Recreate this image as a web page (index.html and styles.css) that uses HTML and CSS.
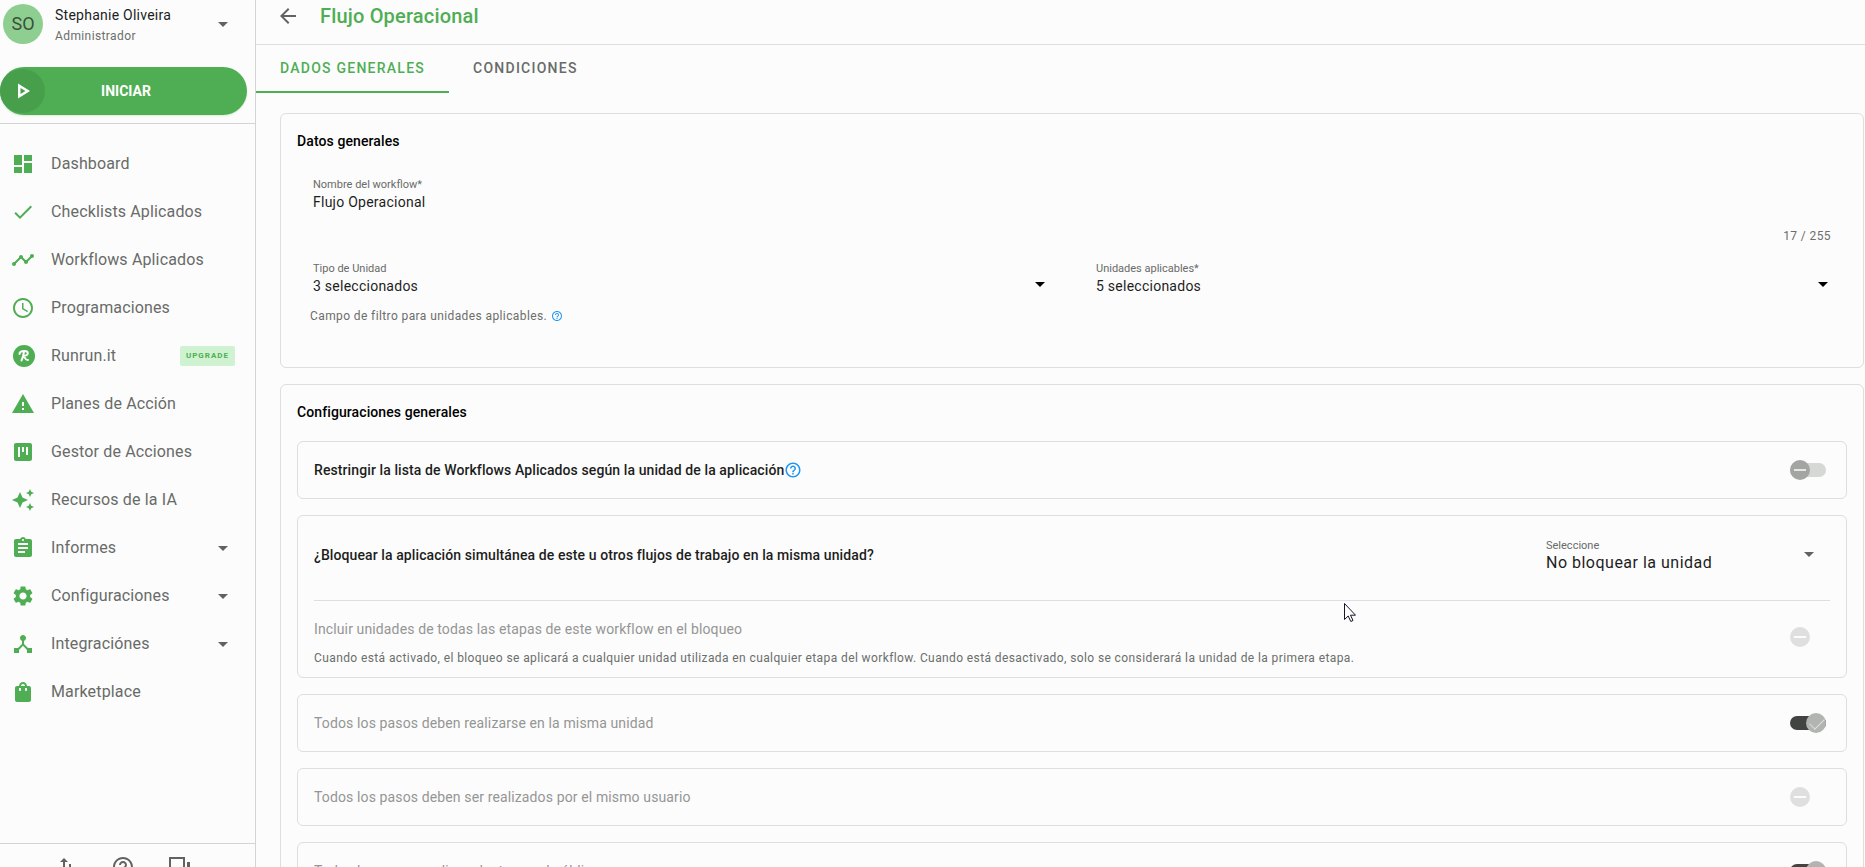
FILE: index.html
```html
<!DOCTYPE html>
<html lang="es">
<head>
<meta charset="UTF-8">
<meta name="viewport" content="width=device-width, initial-scale=1.0">
<title>Flujo Operacional</title>
<link rel="stylesheet" href="styles.css">
</head>
<body>

<div class="app">
  <aside class="sidebar">
    <button class="user" type="button">
      <span class="avatar">SO</span>
      <span class="user-info">
        <span class="user-name">Stephanie Oliveira</span>
        <span class="user-role">Administrador</span>
      </span>
      <svg class="caret" viewBox="0 0 24 24"><path d="M7 10l5 5 5-5z"/></svg>
    </button>

    <div class="start-wrap">
      <button class="start" type="button">
        <span class="start-icon">
          <svg viewBox="0 0 24 24"><path d="M7 4.500v15l12-7.500L7 4.500zm2.500 4.500L14.500 12l-5 3V9z"/></svg>
        </span>
        <span class="start-text">INICIAR</span>
      </button>
    </div>

    <nav class="menu">
      <a href="#"><svg viewBox="0 0 24 24"><path d="M3 13h8V3H3v10zm0 8h8v-6H3v6zm10 0h8V11h-8v10zm0-18v6h8V3h-8z"/></svg><span>Dashboard</span></a>
      <a href="#"><svg viewBox="0 0 24 24"><path d="M9 16.170L4.830 12l-1.420 1.410L9 19 21 7l-1.410-1.410z"/></svg><span>Checklists Aplicados</span></a>
      <a href="#"><svg viewBox="0 0 24 24"><path d="M23 8c0 1.100-.9 2-2 2-.18 0-.35-.02-.51-.07l-3.560 3.550c.05.16.07.34.07.52 0 1.100-.9 2-2 2s-2-.9-2-2c0-.18.02-.36.07-.52l-2.550-2.550c-.16.05-.34.07-.52.07s-.36-.02-.52-.07l-4.550 4.560c.05.16.07.33.07.51 0 1.100-.9 2-2 2s-2-.9-2-2 .9-2 2-2c.18 0 .35.02.51.07l4.560-4.550C8.020 9.360 8 9.180 8 9c0-1.100.9-2 2-2s2 .9 2 2c0 .18-.02.36-.07.52l2.550 2.550c.16-.05.34-.07.52-.07s.36.02.52.07l3.550-3.560C19.020 8.350 19 8.180 19 8c0-1.100.9-2 2-2s2 .9 2 2z"/></svg><span>Workflows Aplicados</span></a>
      <a href="#"><svg viewBox="0 0 24 24"><path d="M11.990 2C6.470 2 2 6.480 2 12s4.470 10 9.990 10C17.520 22 22 17.520 22 12S17.520 2 11.990 2zM12 20c-4.420 0-8-3.580-8-8s3.580-8 8-8 8 3.580 8 8-3.580 8-8 8zm.5-13H11v6l5.250 3.150.75-1.230-4.500-2.670z"/></svg><span>Programaciones</span></a>
      <a href="#"><svg viewBox="0 0 24 24"><circle cx="13" cy="12" r="11"/><path class="brand-line" d="M8.500 10c0-2 2-3 5-3 4 0 5 4.500-1 5 1.500.3 1.300 4.500 4.500 4M13 7.500c-.4 3-1 6-2.500 9"/></svg><span>Runrun.it</span><span class="tag">UPGRADE</span></a>
      <a href="#"><svg viewBox="0 0 24 24"><path d="M1 21h22L12 2 1 21zm12-3h-2v-2h2v2zm0-4h-2v-4h2v4z"/></svg><span>Planes de Acción</span></a>
      <a href="#"><svg viewBox="0 0 24 24"><path d="M19 3H5c-1.100 0-2 .9-2 2v14c0 1.100.9 2 2 2h14c1.100 0 2-.9 2-2V5c0-1.100-.9-2-2-2zM9 17H7V7h2v10zm4-5h-2V7h2v5zm4 3h-2V7h2v8z"/></svg><span>Gestor de Acciones</span></a>
      <a href="#"><svg viewBox="0 0 24 24"><path d="M19 9l1.250-2.750L23 5l-2.750-1.250L19 1l-1.250 2.750L15 5l2.750 1.250L19 9zm-7.500.5L9 4 6.500 9.500 1 12l5.500 2.500L9 20l2.500-5.500L17 12l-5.500-2.500zM19 15l-1.250 2.750L15 19l2.750 1.250L19 23l1.250-2.750L23 19l-2.750-1.250L19 15z"/></svg><span>Recursos de la IA</span></a>
      <a href="#"><svg viewBox="0 0 24 24"><path d="M19 3h-4.180C14.400 1.840 13.300 1 12 1c-1.300 0-2.400.84-2.820 2H5c-1.100 0-2 .9-2 2v14c0 1.100.9 2 2 2h14c1.100 0 2-.9 2-2V5c0-1.100-.9-2-2-2zm-7 0c.55 0 1 .45 1 1s-.45 1-1 1-1-.45-1-1 .45-1 1-1zm2 14H7v-2h7v2zm3-4H7v-2h10v2zm0-4H7V7h10v2z"/></svg><span>Informes</span><svg class="caret" viewBox="0 0 24 24"><path d="M7 10l5 5 5-5z"/></svg></a>
      <a href="#"><svg viewBox="0 0 24 24"><path d="M19.140 12.940c.04-.3.06-.61.06-.94 0-.32-.02-.64-.07-.94l2.030-1.580c.18-.14.23-.41.12-.61l-1.920-3.320c-.12-.22-.37-.29-.59-.22l-2.390.96c-.5-.38-1.030-.7-1.620-.94l-.36-2.540c-.04-.24-.24-.41-.48-.41h-3.840c-.24 0-.43.17-.47.41l-.36 2.540c-.59.24-1.130.57-1.620.94l-2.390-.96c-.22-.08-.47 0-.59.22L2.740 8.870c-.12.21-.08.47.12.61l2.030 1.580c-.05.3-.09.63-.09.94s.02.64.07.94l-2.030 1.580c-.18.14-.23.41-.12.61l1.920 3.320c.12.22.37.29.59.22l2.390-.96c.5.38 1.030.7 1.620.94l.36 2.540c.05.24.24.41.48.41h3.840c.24 0 .44-.17.47-.41l.36-2.540c.59-.24 1.130-.56 1.620-.94l2.390.96c.22.08.47 0 .59-.22l1.920-3.320c.12-.22.07-.47-.12-.61l-2.010-1.580zM12 15.600c-1.980 0-3.600-1.620-3.600-3.600s1.620-3.600 3.600-3.600 3.600 1.620 3.600 3.600-1.620 3.600-3.600 3.600z"/></svg><span>Configuraciones</span><svg class="caret" viewBox="0 0 24 24"><path d="M7 10l5 5 5-5z"/></svg></a>
      <a href="#"><svg viewBox="0 0 24 24"><path d="M17 16l-4-4V8.820C14.160 8.400 15 7.300 15 6c0-1.660-1.340-3-3-3S9 4.340 9 6c0 1.300.84 2.400 2 2.820V12l-4 4H3v5h5v-3.050l4-4.200 4 4.200V21h5v-5h-4z"/></svg><span>Integraciónes</span><svg class="caret" viewBox="0 0 24 24"><path d="M7 10l5 5 5-5z"/></svg></a>
      <a href="#"><svg viewBox="0 0 24 24"><path d="M18 6h-2c0-2.210-1.790-4-4-4S8 3.790 8 6H6c-1.100 0-2 .9-2 2v12c0 1.100.9 2 2 2h12c1.100 0 2-.9 2-2V8c0-1.100-.9-2-2-2zm-8 4c0 .55-.45 1-1 1s-1-.45-1-1V8h2v2zm2-6c1.100 0 2 .9 2 2h-4c0-1.100.9-2 2-2zm4 6c0 .55-.45 1-1 1s-1-.45-1-1V8h2v2z"/></svg><span>Marketplace</span></a>
    </nav>

    <footer class="sidebar-footer">
      <button type="button" aria-label="Cambiar"><svg viewBox="0 0 24 24"><path d="M9 3L5 7h3v8h2V7h3L9 3zm7 6h-2v9h-3l4 4 4-4h-3V9z"/></svg></button>
      <button type="button" aria-label="Ayuda"><svg viewBox="0 0 24 24"><path d="M11 18h2v-2h-2v2zm1-16C6.480 2 2 6.480 2 12s4.480 10 10 10 10-4.480 10-10S17.520 2 12 2zm0 18c-4.410 0-8-3.590-8-8s3.590-8 8-8 8 3.590 8 8-3.590 8-8 8zm0-14c-2.210 0-4 1.790-4 4h2c0-1.100.9-2 2-2s2 .9 2 2c0 2-3 1.750-3 5h2c0-2.250 3-2.500 3-5 0-2.210-1.790-4-4-4z"/></svg></button>
      <button type="button" aria-label="Salir"><svg viewBox="0 0 24 24"><path d="M2 2h16v20H2V2zm2 2v16h12V4H4zm16 3h3v13h-3V7z"/></svg></button>
    </footer>
  </aside>

  <main class="content">
    <header class="topbar">
      <a href="#" class="back" aria-label="Volver"><svg viewBox="0 0 24 24"><path d="M20 11H7.830l5.590-5.590L12 4l-8 8 8 8 1.410-1.410L7.830 13H20v-2z"/></svg></a>
      <h1>Flujo Operacional</h1>
    </header>

    <div class="tabs">
      <button class="tab active" type="button">DADOS GENERALES</button>
      <button class="tab" type="button">CONDICIONES</button>
    </div>

    <div class="cards">
      <section class="card">
        <h2>Datos generales</h2>
        <div class="form">
          <div class="field">
            <label for="nombre">Nombre del workflow*</label>
            <input id="nombre" type="text" value="Flujo Operacional">
            <span class="counter">17 / 255</span>
          </div>
          <div class="columns">
            <div class="field">
              <label for="tipo">Tipo de Unidad</label>
              <div class="select">
                <select id="tipo"><option>3 seleccionados</option></select>
                <svg class="caret" viewBox="0 0 24 24"><path d="M7 10l5 5 5-5z"/></svg>
              </div>
            </div>
            <div class="field">
              <label for="unidades">Unidades aplicables*</label>
              <div class="select">
                <select id="unidades"><option>5 seleccionados</option></select>
                <svg class="caret" viewBox="0 0 24 24"><path d="M7 10l5 5 5-5z"/></svg>
              </div>
            </div>
          </div>
        </div>
        <p class="hint">Campo de filtro para unidades aplicables.
          <svg class="help small" viewBox="0 0 24 24"><path d="M11 18h2v-2h-2v2zm1-16C6.480 2 2 6.480 2 12s4.480 10 10 10 10-4.480 10-10S17.520 2 12 2zm0 18c-4.410 0-8-3.590-8-8s3.590-8 8-8 8 3.590 8 8-3.590 8-8 8zm0-14c-2.210 0-4 1.790-4 4h2c0-1.100.9-2 2-2s2 .9 2 2c0 2-3 1.750-3 5h2c0-2.250 3-2.500 3-5 0-2.210-1.790-4-4-4z"/></svg>
        </p>
      </section>

      <section class="card">
        <h2>Configuraciones generales</h2>

        <div class="option">
          <div class="option-row">
            <label for="restringir">Restringir la lista de Workflows Aplicados según la unidad de la aplicación</label>
            <svg class="help" viewBox="0 0 24 24"><path d="M11 18h2v-2h-2v2zm1-16C6.480 2 2 6.480 2 12s4.480 10 10 10 10-4.480 10-10S17.520 2 12 2zm0 18c-4.410 0-8-3.590-8-8s3.590-8 8-8 8 3.590 8 8-3.590 8-8 8zm0-14c-2.210 0-4 1.790-4 4h2c0-1.100.9-2 2-2s2 .9 2 2c0 2-3 1.750-3 5h2c0-2.250 3-2.500 3-5 0-2.210-1.790-4-4-4z"/></svg>
            <input id="restringir" class="switch" type="checkbox">
          </div>
        </div>

        <div class="option">
          <div class="option-row lock">
            <span class="option-title">¿Bloquear la aplicación simultánea de este u otros flujos de trabajo en la misma unidad?</span>
            <div class="field lock-field">
              <label for="bloqueo">Seleccione</label>
              <div class="select">
                <select id="bloqueo"><option>No bloquear la unidad</option></select>
                <svg class="caret" viewBox="0 0 24 24"><path d="M7 10l5 5 5-5z"/></svg>
              </div>
            </div>
          </div>
          <div class="option-row include">
            <div class="include-text">
              <label class="disabled" for="incluir">Incluir unidades de todas las etapas de este workflow en el bloqueo</label>
              <p>Cuando está activado, el bloqueo se aplicará a cualquier unidad utilizada en cualquier etapa del workflow. Cuando está desactivado, solo se considerará la unidad de la primera etapa.</p>
            </div>
            <input id="incluir" class="switch" type="checkbox" disabled>
          </div>
        </div>

        <div class="option">
          <div class="option-row">
            <label class="disabled" for="misma">Todos los pasos deben realizarse en la misma unidad</label>
            <input id="misma" class="switch" type="checkbox" checked disabled>
          </div>
        </div>

        <div class="option">
          <div class="option-row">
            <label class="disabled" for="usuario">Todos los pasos deben ser realizados por el mismo usuario</label>
            <input id="usuario" class="switch" type="checkbox" disabled>
          </div>
        </div>

        <div class="option">
          <div class="option-row">
            <label class="disabled" for="publico">Todos los pasos realizan dentro en el público</label>
            <input id="publico" class="switch" type="checkbox" checked disabled>
          </div>
        </div>
      </section>
    </div>
  </main>
</div>

<svg class="cursor" viewBox="0 0 12 19"><path d="M.5.5v16l3.700-3.500 2.600 5.500 2.200-1-2.500-5.300h5z"/></svg>

</body>
</html>
```
FILE: styles.css
```css
* {
  box-sizing: border-box;
}
body {
  margin: 0;
  background-color: #fcfcfc;
  color: #1c1e1c;
  font-family: Roboto, "Liberation Sans", sans-serif;
  font-size: 14px;
  line-height: 20px;
  overflow: hidden;
}
button, input, select {
  font: inherit;
  letter-spacing: inherit;
  color: inherit;
  border: 0;
  padding: 0;
  margin: 0;
  background: none;
}
h1, h2, p {
  margin: 0;
}
a {
  color: inherit;
  text-decoration: none;
}
svg {
  width: 24px;
  height: 24px;
  fill: currentColor;
  flex: none;
}
.app {
  display: flex;
  height: 100vh;
}

/* sidebar */
.sidebar {
  display: flex;
  flex-direction: column;
  width: 256px;
  flex: none;
  border-right: 1px solid #d4d4d4;
  overflow: hidden;
}
.caret {
  width: 24px;
  height: 24px;
  color: #606360;
}
.user {
  display: flex;
  align-items: center;
  height: 48px;
  padding: 0 20px 0 3px;
  text-align: left;
}
.avatar {
  width: 40px;
  height: 40px;
  border-radius: 50%;
  background-color: #8fce91;
  color: #38523a;
  font-size: 18px;
  line-height: 40px;
  text-align: center;
}
.user-info {
  display: flex;
  flex-direction: column;
  flex: 1;
  gap: 1px;
  margin-left: 12px;
  padding-top: 3px;
}
.user-name {
  font-size: 14px;
  letter-spacing: 0.018em;
}
.user-role {
  font-size: 12px;
  letter-spacing: 0.033em;
  color: #6b6e6b;
}
.start-wrap {
  padding: 19px 8px 8px 0;
  border-bottom: 1px solid #d4d4d4;
}
.start {
  display: flex;
  align-items: center;
  width: 100%;
  height: 48px;
  border-radius: 24px;
  background-color: #4fae53;
  color: #fff;
  font-weight: 700;
  box-shadow: 0 1px 2px #d9ecd9;
}
.start-icon {
  display: flex;
  align-items: center;
  justify-content: center;
  width: 45px;
  height: 44px;
  border-radius: 22px;
  background-color: #489f4b;
}
.start-text {
  flex: 1;
  padding-right: 40px;
}
.menu {
  flex: 1;
  padding-top: 16px;
}
.menu a {
  display: flex;
  align-items: center;
  height: 48px;
  padding: 0 20px 0 11px;
  font-size: 16px;
  letter-spacing: 0.009em;
  color: #686b68;
}
.menu a > svg:first-child {
  color: #4fae53;
  margin-right: 16px;
}
.menu .caret {
  margin-left: auto;
}
.menu .brand-line {
  fill: none;
  stroke: #fcfcfc;
  stroke-width: 2;
  stroke-linecap: round;
}
.tag {
  margin-left: auto;
  padding: 0 6px;
  border-radius: 2px;
  background-color: #cff2d0;
  color: #4fae53;
  font-size: 8px;
  font-weight: 700;
  letter-spacing: 1px;
}
.sidebar-footer {
  display: flex;
  justify-content: center;
  gap: 32px;
  height: 24px;
  padding: 11px 10px 0 0;
  border-top: 1px solid #d4d4d4;
  color: #606360;
}

/* content */
.content {
  flex: 1;
  min-width: 0;
  overflow: hidden;
}
.topbar {
  display: flex;
  align-items: center;
  height: 45px;
  padding: 0 20px 12px;
  border-bottom: 1px solid #dedede;
}
.back {
  display: flex;
  color: #606360;
}
.topbar h1 {
  margin-left: 20px;
  font-size: 20px;
  font-weight: 500;
  line-height: 32px;
  letter-spacing: 0.009em;
  color: #4fae53;
}
.tabs {
  display: flex;
  height: 48px;
}
.tab {
  padding: 0 24px;
  border-bottom: 2px solid transparent;
  font-weight: 500;
  letter-spacing: 0.089em;
  color: #686b68;
}
.tab.active {
  color: #4fae53;
  border-bottom-color: #4fae53;
}
.cards {
  display: flex;
  flex-direction: column;
  gap: 16px;
  padding: 20px 1px 0 24px;
}
.card {
  border: 1px solid #dedede;
  border-radius: 6px;
  padding: 16px;
}
.card h2 {
  padding-bottom: 2px;
  font-size: 14px;
  font-weight: 500;
  line-height: 22px;
  letter-spacing: 0.007em;
  color: #000;
}
.form {
  padding: 23px 16px 0;
}
.field {
  display: flex;
  flex-direction: column;
}
.field label {
  font-size: 11px;
  line-height: 15px;
  color: #686b68;
}
.field input, .field select {
  width: 100%;
  height: 20px;
  appearance: none;
  outline: none;
  letter-spacing: 0.018em;
}
.counter {
  align-self: flex-end;
  margin-top: 14px;
  font-size: 12px;
  line-height: 20px;
  letter-spacing: 0.033em;
  color: #6b6e6b;
}
.columns {
  display: grid;
  grid-template-columns: 1fr 1fr;
  gap: 48px;
  margin-top: 15px;
}
.select {
  position: relative;
}
.select .caret {
  position: absolute;
  right: -4px;
  top: -4px;
  color: #000;
  pointer-events: none;
}
.hint {
  display: flex;
  align-items: center;
  gap: 4px;
  padding: 10px 0 25px 13px;
  font-size: 12px;
  letter-spacing: 0.033em;
  color: #6b6e6b;
}
.help {
  width: 18px;
  height: 18px;
  color: #2196f3;
}
.help.small {
  width: 12px;
  height: 12px;
}
.option {
  margin-top: 16px;
  padding: 0 16px;
  border: 1px solid #dedede;
  border-radius: 6px;
}
.option-row {
  display: flex;
  align-items: center;
  height: 56px;
}
.option-row > label, .option-title {
  font-weight: 500;
  letter-spacing: 0.007em;
}
.option-row .disabled {
  font-weight: 400;
  letter-spacing: 0.009em;
  color: #949694;
}
.option-row.lock {
  height: 85px;
  padding-bottom: 6px;
  border-bottom: 1px solid #dedede;
}
.lock-field {
  width: 272px;
  margin-left: auto;
  margin-right: 12px;
}
.lock-field select {
  font-size: 16px;
  letter-spacing: 0.031em;
}
.lock-field .caret {
  right: -3px;
  top: -11px;
  color: #606360;
}
.option-row.include {
  height: 76px;
  padding-bottom: 4px;
}
.include-text {
  padding-top: 12px;
}
.include p {
  margin-top: 9px;
  font-size: 12px;
  letter-spacing: 0.033em;
  color: #6b6e6b;
}

/* switches */
.switch {
  position: relative;
  appearance: none;
  width: 36px;
  height: 14px;
  margin: 0 4px 0 auto;
  border-radius: 7px;
  background-color: #d6d8d6;
}
.switch::before {
  content: "";
  position: absolute;
  left: 0;
  top: -3px;
  width: 20px;
  height: 20px;
  border-radius: 50%;
  background-color: #a3a5a3;
}
.switch::after {
  content: "";
  position: absolute;
  left: 4px;
  top: 6px;
  width: 12px;
  height: 2px;
  background-color: #e6e6e6;
}
.switch:disabled {
  background-color: transparent;
}
.switch:disabled::before {
  background-color: #dfdfdf;
}
.switch:disabled::after {
  background-color: #fcfcfc;
}
.switch:checked {
  background-color: #424442;
}
.switch:checked::before {
  left: 16px;
  background-color: #b2b4b2;
}
.switch:checked::after {
  left: 20px;
  top: 2px;
  width: 13px;
  height: 7px;
  background: none;
  border-left: 1px solid #dedede;
  border-bottom: 1px solid #dedede;
  transform: rotate(-45deg);
}

.cursor {
  position: absolute;
  left: 1344px;
  top: 603px;
  width: 12px;
  height: 19px;
  fill: #fff;
  stroke: #15152b;
  pointer-events: none;
}
```
